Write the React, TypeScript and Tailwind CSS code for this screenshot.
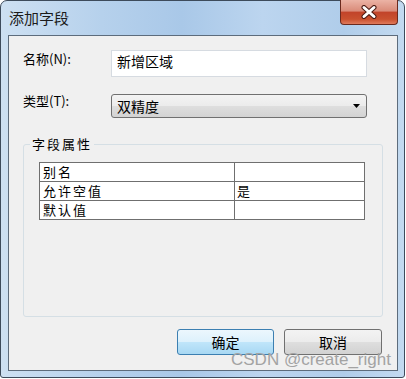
const cjk = "font-['Noto_Sans_CJK_SC','Noto_Sans',sans-serif]";

const rows = [
  { name: '别名', value: '' },
  { name: '允许空值', value: '是' },
  { name: '默认值', value: '' },
];

export default function App() {
  return (
    <div className="w-[406px] h-[379px] bg-white">
      <div className="relative w-[405px] h-[378px] flex flex-col border border-[#3d4b5b] rounded-t-[7px] rounded-b-[3px] pl-[7px] pr-[6px] pb-[6px] bg-[linear-gradient(90deg,#cde0f2_0%,#b6d1ec_25%,#a9c8e8_45%,#bcd5ef_65%,#b0cdea_85%,#c3daf0_100%)]">
        {/* title bar */}
        <div className="h-[34px] flex items-start justify-between">
          <span className={`${cjk} ml-[1px] mt-[8px] text-[15px] leading-[18px] text-[#1b1b1b]`}>添加字段</span>
          <div className="-mt-[1px] w-[58px] h-[25px] flex items-center justify-center border border-t-0 border-[#6a2a1e] rounded-b-[4px] bg-[linear-gradient(180deg,#ebb3a5_0%,#da8c7a_45%,#c2442a_52%,#c9512f_80%,#e07a5c_100%)]">
            <svg width="16" height="14" viewBox="0 0 16 14">
              <path d="M3 2.5 L13 11.5 M13 2.5 L3 11.5" stroke="#4a1a12" strokeWidth="5" strokeLinecap="round" />
              <path d="M3 2.5 L13 11.5 M13 2.5 L3 11.5" stroke="#ffffff" strokeWidth="3" strokeLinecap="round" />
            </svg>
          </div>
        </div>

        {/* client area */}
        <div className="flex-1 flex flex-col border border-[#5d6c7c] bg-[#f0f0f0] pt-[14px] px-[14px]">
          <div className="flex items-start h-[27px]">
            <span className={`${cjk} w-[88px] mt-[1px] text-[13px] leading-[16px] text-black`}>名称(N):</span>
            <div className={`${cjk} w-[256px] h-[27px] bg-white border border-[#d6dbe1] pl-[5px] pt-[1px] text-[14px] leading-[18px] text-black`}>
              新增区域
            </div>
          </div>

          <div className="flex items-start h-[24px] mt-[17px]">
            <span className={`${cjk} w-[88px] mt-[-1px] text-[13px] leading-[16px] text-black`}>类型(T):</span>
            <div className="w-[256px] h-[24px] flex items-center justify-between border border-[#707070] rounded-[3px] pl-[5px] pr-[5px] bg-[linear-gradient(180deg,#f3f3f3_0%,#ececec_48%,#dedede_52%,#d3d3d3_100%)]">
              <span className={`${cjk} text-[14px] leading-[18px] text-black`}>双精度</span>
              <svg width="8" height="4" viewBox="0 0 8 4">
                <path d="M0 0 H7 L3.5 4 Z" fill="#000" />
              </svg>
            </div>
          </div>

          <fieldset className="mt-[18px] w-[360px] h-[181px] border border-[#d5dfe5] rounded-[3px]">
            <legend className={`${cjk} ml-[6px] px-[2px] text-[13px] leading-[16px] tracking-[2px] text-black`}>字段属性</legend>
            <table className={`${cjk} mt-[10px] ml-[15px] w-[326px] border-collapse bg-white text-[13px] tracking-[2px] text-black`}>
              <tbody>
                {rows.map((r) => (
                  <tr key={r.name} className="h-[19px]">
                    <td className="w-[195px] border border-[#6f6f6f] pl-[3px] leading-[16px] p-0 align-middle">{r.name}</td>
                    <td className="border border-[#6f6f6f] pl-[2px] leading-[16px] p-0 align-middle">{r.value}</td>
                  </tr>
                ))}
              </tbody>
            </table>
          </fieldset>

          <div className="mt-[12px] mr-[1px] flex justify-end gap-[10px]">
            <button className={`${cjk} w-[97px] h-[26px] border border-[#3c7fb1] rounded-[3px] text-[14px] text-black bg-[linear-gradient(180deg,#ecf7fd_0%,#ddf1fc_48%,#bfe5fa_52%,#a8d8f3_100%)]`}>
              确定
            </button>
            <button className={`${cjk} w-[98px] h-[26px] border border-[#707070] rounded-[3px] text-[14px] text-black bg-[linear-gradient(180deg,#f3f3f3_0%,#ececec_48%,#dedede_52%,#d2d2d2_100%)]`}>
              取消
            </button>
          </div>
        </div>

        {/* watermark */}
        <span className="absolute left-[230px] top-[349px] font-['Liberation_Sans',sans-serif] text-[17px] leading-[20px] text-[#a3a3a3] whitespace-nowrap">
          CSDN @create_right
        </span>
      </div>
    </div>
  );
}
